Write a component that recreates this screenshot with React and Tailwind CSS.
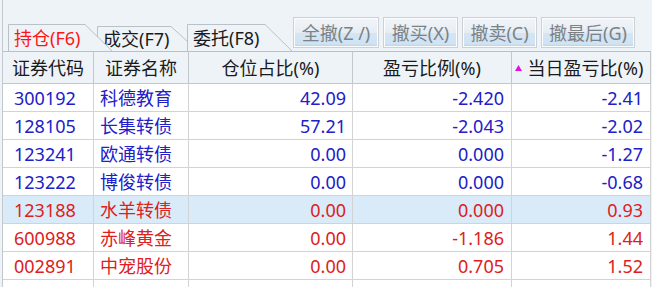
import React from 'react';

const rows = [
  { code: '300192', name: '科德教育', pos: '42.09', pl: '-2.420', day: '-2.41', up: false },
  { code: '128105', name: '长集转债', pos: '57.21', pl: '-2.043', day: '-2.02', up: false },
  { code: '123241', name: '欧通转债', pos: '0.00', pl: '0.000', day: '-1.27', up: false },
  { code: '123222', name: '博俊转债', pos: '0.00', pl: '0.000', day: '-0.68', up: false },
  { code: '123188', name: '水羊转债', pos: '0.00', pl: '0.000', day: '0.93', up: true, selected: true },
  { code: '600988', name: '赤峰黄金', pos: '0.00', pl: '-1.186', day: '1.44', up: true },
  { code: '002891', name: '中宠股份', pos: '0.00', pl: '0.705', day: '1.52', up: true },
];

const Tab = ({ label, width, height, active, className }) => (
  <div className={`relative shrink-0 ${className}`} style={{ width, height }}>
    <svg className="absolute inset-0" width={width} height={height}>
      <path
        d={`M0.5 ${height} V0.5 H${width - 27} L${width} ${height}`}
        fill="#eef3f8"
        stroke="#b9c0c7"
      />
    </svg>
    <div className={`relative flex h-full items-center pl-[6px] pt-[1px] text-[18px] ${active ? 'text-[#ff1414]' : 'text-[#1a1a1a]'}`}>
      {label}
    </div>
  </div>
);

const ActionButton = ({ label, width }) => (
  <div
    className="flex h-[31px] shrink-0 items-center justify-center border border-[#cdd1d5] bg-[linear-gradient(#f2f5f8_0%,#e6edf3_50%,#d5e5f2_51%,#d0e3f2_90%,#aacbe6_100%)] text-[18px] text-[#7b8288] shadow-[inset_0_0_0_1px_#fbfcfd]"
    style={{ width }}
  >
    {label}
  </div>
);

const headCell = 'flex h-[32px] items-center justify-center border-r border-b border-[#c3c7cc] text-[18px] text-[#1a1a1a]';
const cell = 'flex h-[28px] items-center border-r border-b border-[#d3d3d3] text-[18px]';

export default function App() {
  return (
    <div className="flex h-[287px] w-[652px] overflow-hidden bg-[#eef3f8] font-['Noto_Sans','Noto_Sans_CJK_SC',sans-serif] leading-none">
      <div className="w-[2px] shrink-0" />
      <div className="flex w-[649px] shrink-0 flex-col border-l border-[#c3c8ce]">
        {/* 标签页 + 撤单按钮 */}
        <div className="flex h-[51px] shrink-0 items-end pl-[5px]">
          <Tab label="持仓(F6)" width={104} height={27} active className="z-30" />
          <Tab label="成交(F7)" width={101} height={25} className="z-10 ml-[-15px]" />
          <Tab label="委托(F8)" width={105} height={27} className="z-20 ml-[-11px]" />
          <div className="mb-[3px] ml-[1px] flex gap-[4px] self-end">
            <ActionButton label="全撤(Z /)" width={86} />
            <ActionButton label="撤买(X)" width={75} />
            <ActionButton label="撤卖(C)" width={75} />
            <ActionButton label="撤最后(G)" width={94} />
          </div>
        </div>

        {/* 持仓表 */}
        <div className="grid flex-1 grid-cols-[91px_95px_164px_159px_139px] content-start border-t border-[#b9c0c7] bg-white">
          <div className={`${headCell} bg-[#eef3f8]`}>证券代码</div>
          <div className={`${headCell} bg-[#eef3f8]`}>证券名称</div>
          <div className={`${headCell} bg-[#eef3f8]`}>仓位占比(%)</div>
          <div className={`${headCell} bg-[#eef3f8]`}>盈亏比例(%)</div>
          <div className={`${headCell} gap-[6px] bg-[#eef3f8] pr-[4px]`}>
            <svg width="7" height="6" viewBox="0 0 7 6">
              <path d="M3.5 0 L7 6 H0 Z" fill="#e010e0" />
            </svg>
            当日盈亏比(%)
          </div>

          {rows.map((r) => {
            const color = r.up ? 'text-[#de2020]' : 'text-[#2020c8]';
            const bg = r.selected ? 'bg-[#d9ebf9]' : '';
            return (
              <React.Fragment key={r.code}>
                <div className={`${cell} ${color} ${bg} pl-[11px]`}>{r.code}</div>
                <div className={`${cell} ${color} ${bg} pl-[6px]`}>{r.name}</div>
                <div className={`${cell} ${color} ${bg} justify-end pr-[6px]`}>{r.pos}</div>
                <div className={`${cell} ${color} ${bg} justify-end pr-[7px]`}>{r.pl}</div>
                <div className={`${cell} ${color} ${bg} justify-end pr-[7px]`}>{r.day}</div>
              </React.Fragment>
            );
          })}

          <div className="h-[28px] border-r border-[#d3d3d3]" />
          <div className="h-[28px] border-r border-[#d3d3d3]" />
          <div className="h-[28px] border-r border-[#d3d3d3]" />
          <div className="h-[28px] border-r border-[#d3d3d3]" />
          <div className="h-[28px] border-r border-[#d3d3d3]" />
        </div>
      </div>
    </div>
  );
}
